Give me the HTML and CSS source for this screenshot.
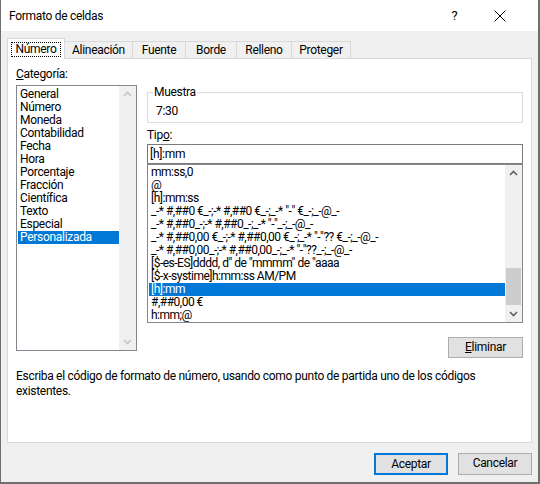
FILE: index.html
```html
<!DOCTYPE html>
<html lang="es">
<head>
<meta charset="utf-8">
<title>Formato de celdas</title>
<link rel="stylesheet" href="styles.css">
</head>
<body>
<div class="dialog">
  <div class="titlebar">
    <span class="title">Formato de celdas</span>
    <span class="help">?</span>
    <span class="close"><svg width="12" height="12" viewBox="0 0 12 12"><path d="M0.5 0.5 L11.5 11.5 M11.5 0.5 L0.5 11.5" stroke="#000" stroke-width="1" fill="none"/></svg></span>
  </div>
  <div class="body">
    <div class="tabs">
      <div class="tab active"><span class="focus">Número</span></div>
      <div class="tab t2">Alineación</div>
      <div class="tab t3">Fuente</div>
      <div class="tab t4">Borde</div>
      <div class="tab t5">Relleno</div>
      <div class="tab t6">Proteger</div>
    </div>
    <div class="panel">
      <div class="columns">
        <div class="leftcol">
          <div class="label"><u>C</u>ategoría:</div>
          <div class="listbox catlist">
            <div class="items">
              <div class="item">General</div>
              <div class="item">Número</div>
              <div class="item">Moneda</div>
              <div class="item">Contabilidad</div>
              <div class="item">Fecha</div>
              <div class="item">Hora</div>
              <div class="item">Porcentaje</div>
              <div class="item">Fracción</div>
              <div class="item">Científica</div>
              <div class="item">Texto</div>
              <div class="item">Especial</div>
              <div class="item sel">Personalizada</div>
            </div>
            <div class="scroll disabled">
              <svg class="arrow" width="9" height="6" viewBox="0 0 9 6"><path d="M1 5 L4.5 1.5 L8 5" stroke="#c4c4c4" stroke-width="1.6" fill="none"/></svg>
              <div class="track"></div>
              <svg class="arrow" width="9" height="6" viewBox="0 0 9 6"><path d="M1 1 L4.5 4.5 L8 1" stroke="#c4c4c4" stroke-width="1.6" fill="none"/></svg>
            </div>
          </div>
        </div>
        <div class="rightcol">
          <fieldset class="group">
            <legend>Muestra</legend>
            <div class="sample">7:30</div>
          </fieldset>
          <div class="label tipo">Tip<u>o</u>:</div>
          <div class="input">[h]:mm</div>
          <div class="listbox typelist">
            <div class="items">
              <div class="item">mm:ss,0</div>
              <div class="item">@</div>
              <div class="item">[h]:mm:ss</div>
              <div class="item">_-* #,##0 €_-;-* #,##0 €_-;_-* "-" €_-;_-@_-</div>
              <div class="item">_-* #,##0_-;-* #,##0_-;_-* "-"_-;_-@_-</div>
              <div class="item">_-* #,##0,00 €_-;-* #,##0,00 €_-;_-* "-"?? €_-;_-@_-</div>
              <div class="item">_-* #,##0,00_-;-* #,##0,00_-;_-* "-"??_-;_-@_-</div>
              <div class="item">[$-es-ES]dddd, d" de "mmmm" de "aaaa</div>
              <div class="item">[$-x-systime]h:mm:ss AM/PM</div>
              <div class="item sel">[h]:mm</div>
              <div class="item">#,##0,00 €</div>
              <div class="item">h:mm;@</div>
            </div>
            <div class="scroll">
              <svg class="arrow" width="9" height="6" viewBox="0 0 9 6"><path d="M1 5 L4.5 1.5 L8 5" stroke="#606060" stroke-width="1.6" fill="none"/></svg>
              <div class="track"><div class="thumb"></div></div>
              <svg class="arrow" width="9" height="6" viewBox="0 0 9 6"><path d="M1 1 L4.5 4.5 L8 1" stroke="#606060" stroke-width="1.6" fill="none"/></svg>
            </div>
          </div>
          <div class="btnrow">
            <div class="button eliminar"><u>E</u>liminar</div>
          </div>
        </div>
      </div>
      <p class="desc">Escriba el código de formato de número, usando como punto de partida uno de los códigos existentes.</p>
    </div>
    <div class="footer">
      <div class="button default">Aceptar</div>
      <div class="button cancel">Cancelar</div>
    </div>
  </div>
</div>
</body>
</html>
```

FILE: styles.css
```css
* { box-sizing: border-box; }
html, body { margin: 0; padding: 0; }
body {
  width: 540px;
  height: 484px;
  overflow: hidden;
  font-family: "Segoe UI", Roboto, "Noto Sans", sans-serif;
  font-size: 12px;
  letter-spacing: -0.3px;
  color: #000;
  background: #f0f0f0;
}
u { text-decoration: underline; text-underline-offset: 1px; }
.dialog {
  width: 540px;
  height: 484px;
  border-left: 1px solid #6f6f6f;
  border-right: 2px solid #6f6f6f;
  border-bottom: 2px solid #6f6f6f;
  display: flex;
  flex-direction: column;
  background: #f0f0f0;
}
.titlebar {
  height: 31px;
  background: #fff;
  display: flex;
  align-items: center;
  padding-left: 8px;
  flex: none;
}
.title { font-size: 12px; flex: 1; }
.help { font-size: 13px; width: 45px; text-align: center; }
.close { width: 45px; display: flex; justify-content: center; margin-right: 16px; }
.body {
  flex: 1;
  display: flex;
  flex-direction: column;
  padding: 7px 7px 0 6px;
}
.tabs {
  display: flex;
  align-items: flex-end;
  height: 20px;
  position: relative;
  z-index: 1;
}
.tab {
  height: 17px;
  line-height: 16px;
  border: 1px solid #d9d9d9;
  border-bottom: none;
  border-left: none;
  background: #f0f0f0;
  text-align: center;
}
.tab.active {
  height: 21px;
  width: 58px;
  background: #fff;
  border-left: 1px solid #d9d9d9;
  margin-bottom: -1px;
  padding-top: 3px;
  line-height: 14px;
}
.tab.active .focus {
  display: inline-block;
  border: 1px dotted #000;
  padding: 0 3px;
  line-height: 13px;
}
.t2 { width: 68px; }
.t3 { width: 53px; }
.t4 { width: 51px; }
.t5 { width: 55px; }
.t6 { width: 59px; }
.panel {
  width: 525px;
  height: 385px;
  background: #fff;
  border: 1px solid #d9d9d9;
  padding: 8px 7px 0 8px;
  flex: none;
}
.columns {
  display: flex;
  gap: 10px;
}
.label { height: 18px; line-height: 15px; }
.leftcol { width: 121px; }
.listbox {
  border: 1px solid #828790;
  display: flex;
  background: #fff;
}
.catlist { height: 266px; }
.items { flex: 1; }
.catlist .items { padding: 2px 0 0 1px; }
.item {
  height: 13px;
  line-height: 13px;
  white-space: nowrap;
  padding-left: 2px;
}
.item.sel { background: #0078d7; color: #fff; }
.scroll {
  width: 17px;
  background: #f0f0f0;
  display: flex;
  flex-direction: column;
  align-items: center;
}
.scroll .arrow { flex: none; margin: 5px 0; }
.scroll .track { flex: 1; width: 100%; position: relative; }
.rightcol {
  width: 376px;
  display: flex;
  flex-direction: column;
  padding-top: 19px;
}
.group {
  margin: 0;
  padding: 0 0 0 8px;
  border: 1px solid #dcdcdc;
  height: 37px;
  min-width: 0;
}
.group legend {
  padding: 0 1px;
  margin-left: -3px;
  line-height: 13px;
}
.sample { line-height: 14px; padding-top: 5px; }
.tipo { margin-top: 5px; height: 16px; }
.input {
  height: 20px;
  border: 1px solid #7a7a7a;
  line-height: 18px;
  padding-left: 2px;
}
.typelist { height: 159px; }
.typelist .items { padding: 1px 0 0 1px; }
.typelist .item { padding-left: 2px; letter-spacing: -0.5px; }
.typelist .thumb {
  position: absolute;
  left: 1px;
  right: 1px;
  top: 87px;
  height: 37px;
  background: #cdcdcd;
}
.btnrow {
  display: flex;
  justify-content: flex-end;
  margin-top: 14px;
}
.button {
  height: 21px;
  line-height: 19px;
  text-align: center;
  background: #e1e1e1;
  border: 1px solid #adadad;
}
.eliminar { width: 75px; }
.desc {
  margin: 11px 0 0 0;
  line-height: 15px;
  width: 490px;
}
.footer {
  display: flex;
  justify-content: flex-end;
  gap: 10px;
  padding-top: 10px;
  padding-right: 0;
}
.footer .button { width: 74px; height: 22px; line-height: 18px; }
.footer .default { border: 2px solid #0078d7; }
.footer .cancel { margin-right: -1px; }
```
